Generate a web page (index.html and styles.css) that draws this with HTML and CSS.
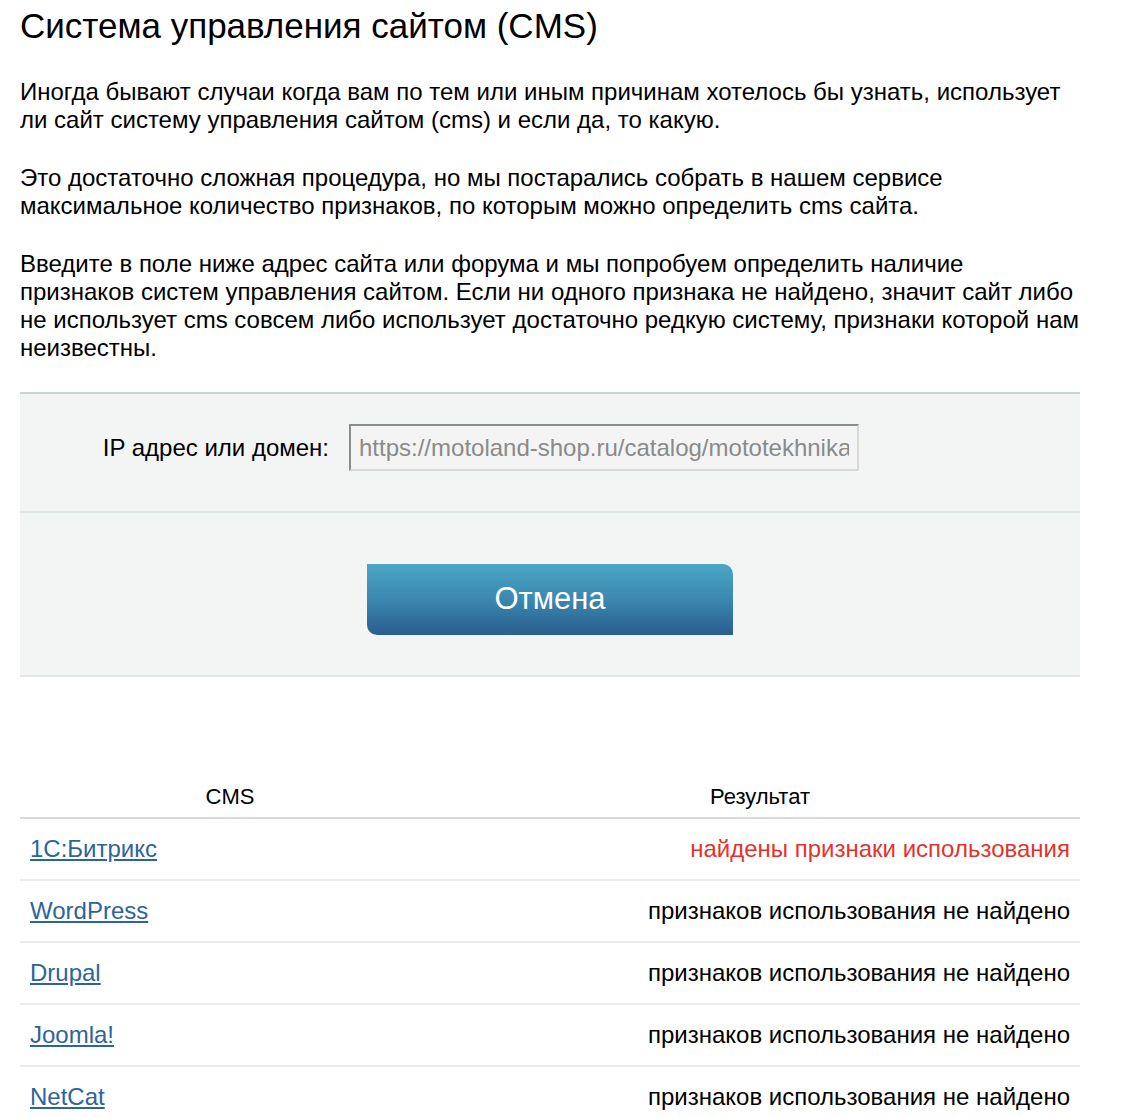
FILE: index.html
```html
<!DOCTYPE html>
<html lang="ru">
<head>
  <meta charset="UTF-8">
  <title>Система управления сайтом (CMS)</title>
  <link rel="stylesheet" href="styles.css">
</head>
<body>
  <div class="page">
    <h1 class="page-title">Система управления сайтом (CMS)</h1>

    <p class="intro">Иногда бывают случаи когда вам по тем или иным причинам хотелось бы узнать, использует ли сайт систему управления сайтом (cms) и если да, то какую.</p>
    <p class="intro">Это достаточно сложная процедура, но мы постарались собрать в нашем сервисе максимальное количество признаков, по которым можно определить cms сайта.</p>
    <p class="intro">Введите в поле ниже адрес сайта или форума и мы попробуем определить наличие признаков систем управления сайтом. Если ни одного признака не найдено, значит сайт либо не использует cms совсем либо использует достаточно редкую систему, признаки которой нам неизвестны.</p>

    <!-- форма проверки -->
    <form class="check-form">
      <div class="form-row">
        <label class="field-label" for="domain">IP адрес или домен:</label>
        <input type="text" id="domain" class="field-input" value="https://motoland-shop.ru/catalog/mototekhnika" readonly>
      </div>
      <div class="form-row form-actions">
        <button type="button" class="btn-cancel">Отмена</button>
      </div>
    </form>

    <table class="cms-table">
      <thead>
        <tr>
          <th class="col-name">CMS</th>
          <th class="col-result">Результат</th>
        </tr>
      </thead>
      <tbody>
        <tr>
          <td><a href="#">1С:Битрикс</a></td>
          <td class="result found">найдены признаки использования</td>
        </tr>
        <tr>
          <td><a href="#">WordPress</a></td>
          <td class="result">признаков использования не найдено</td>
        </tr>
        <tr>
          <td><a href="#">Drupal</a></td>
          <td class="result">признаков использования не найдено</td>
        </tr>
        <tr>
          <td><a href="#">Joomla!</a></td>
          <td class="result">признаков использования не найдено</td>
        </tr>
        <tr>
          <td><a href="#">NetCat</a></td>
          <td class="result">признаков использования не найдено</td>
        </tr>
      </tbody>
    </table>
  </div>
</body>
</html>
```

FILE: styles.css
```css
body {
  margin: 0;
  font-family: "Liberation Sans", Arial, Helvetica, sans-serif;
  color: #000;
  background: #fff;
}

.page {
  width: 1060px;
  padding: 0 20px;
}

.page-title {
  font-size: 35px;
  font-weight: normal;
  line-height: 44px;
  margin: 4px 0 30px;
}

.intro {
  font-size: 24px;
  line-height: 28px;
  margin: 0 0 30px;
}

.check-form {
  margin-top: 29px;
  background: #f3f5f5;
  border-top: 2px solid #c9d4d4;
  border-bottom: 2px solid #e3e7e7;
}

.form-row {
  display: flex;
  align-items: center;
  height: 119px;
  padding-bottom: 10px;
  box-sizing: border-box;
  border-bottom: 2px solid #e1e8e8;
}

.field-label {
  width: 309px;
  text-align: right;
  font-size: 24px;
  margin-right: 20px;
}

.field-input {
  width: 510px;
  height: 47px;
  box-sizing: border-box;
  padding: 0 8px;
  font-family: "Liberation Sans", Arial, sans-serif;
  font-size: 24px;
  color: #8a8a8a;
  background: #f4f4f4;
  border: 2px solid;
  border-color: #8c8c8c #d8d8d8 #d8d8d8 #8c8c8c;
  outline: none;
}

.form-actions {
  height: 162px;
  border-bottom: none;
  justify-content: center;
  padding: 10px 0 0;
}

.btn-cancel {
  width: 366px;
  height: 71px;
  border: none;
  border-radius: 0 10px 0 10px;
  background: linear-gradient(to bottom, #4ba7c6 0%, #3b87b0 50%, #2a5d8d 100%);
  color: #fff;
  font-family: "Liberation Sans", Arial, sans-serif;
  font-size: 31px;
  cursor: pointer;
}

.cms-table {
  width: 1060px;
  margin-top: 100px;
  border-collapse: collapse;
  font-size: 24px;
}

.cms-table th {
  font-size: 22px;
  font-weight: normal;
  height: 40px;
  padding: 0;
  border-bottom: 2px solid #d9d9d9;
}

.col-name {
  width: 420px;
}

.cms-table td {
  height: 60px;
  padding: 0 10px;
  border-bottom: 2px solid #ececec;
}

.cms-table tbody tr:last-child td {
  border-bottom: none;
}

.cms-table a {
  color: #2b6599;
  text-decoration: underline;
}

.result {
  text-align: right;
}

.result.found {
  color: #e2342b;
}
```
